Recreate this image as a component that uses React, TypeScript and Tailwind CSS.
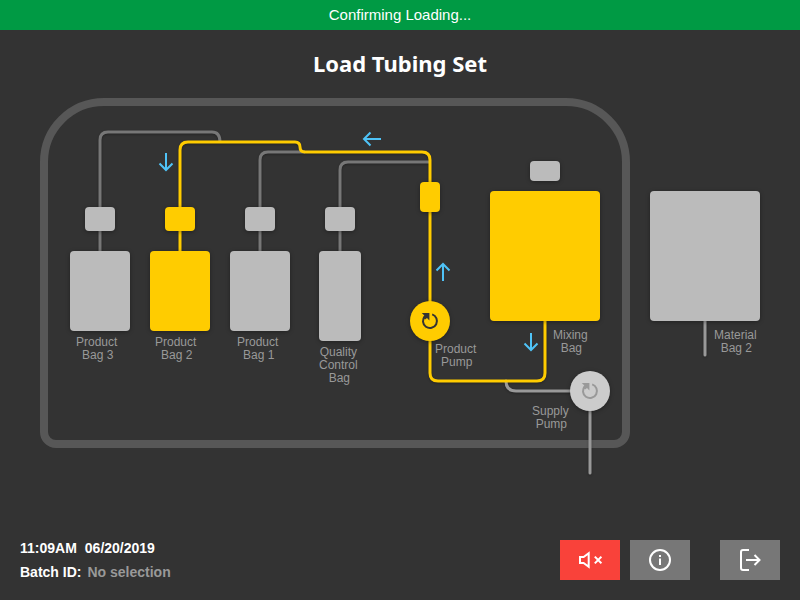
import type { ReactNode } from "react";

type Tone = "active" | "idle";

const toneClass: Record<Tone, string> = {
  active: "bg-[#ffcc00]",
  idle: "bg-[#bbbbbb]",
};

function Block({ tone, place }: { tone: Tone; place: string }) {
  return (
    <div
      className={`absolute rounded-sm shadow-[0_1px_4px_rgba(0,0,0,0.35)] ${toneClass[tone]} ${place}`}
    />
  );
}

function Label({ lines, place }: { lines: string[]; place: string }) {
  return (
    <p className={`absolute text-center text-[12px] leading-[13px] whitespace-nowrap text-[#999999] ${place}`}>
      {lines.map((line) => (
        <span key={line} className="block last:pl-0.5">
          {line}
        </span>
      ))}
    </p>
  );
}

function Pump({ place }: { place: string }) {
  return (
    <div
      className={`absolute flex size-10 items-center justify-center rounded-full shadow-[0_1px_4px_rgba(0,0,0,0.35)] ${place}`}
    >
      <svg viewBox="0 0 20 20" className="size-5" aria-hidden="true">
        <path d="M12.2 3.4A7 7 0 1 1 4.9 5.2" fill="none" stroke="currentColor" strokeWidth="2" />
        <path d="M1.8 2H9.4V9.4L7 7 5 8.4 3.2 6.6 4.3 4.5Z" fill="currentColor" />
      </svg>
    </div>
  );
}

function Arrow({ place }: { place: string }) {
  return (
    <svg viewBox="0 0 20 20" className={`absolute size-5 ${place}`} aria-hidden="true">
      <path d="M10 1V18M3.5 11.5 10 18 16.5 11.5" fill="none" stroke="#4fc3f7" strokeWidth="2" />
    </svg>
  );
}

function Tubing() {
  return (
    <svg
      viewBox="0 0 720 380"
      className="absolute inset-0 h-[380px] w-[720px] drop-shadow-[0_1px_1px_rgba(0,0,0,0.3)]"
      fill="none"
      strokeWidth="3"
      aria-hidden="true"
    >
      <g stroke="#777777">
        <path d="M60 160V42Q60 34 68 34H172Q180 34 180 44" />
        <path d="M220 160V62Q220 54 228 54H265" />
        <path d="M300 160V72Q300 64 308 64H390" />
      </g>
      <g stroke="#999999" strokeLinecap="round">
        <path d="M466 283Q466 293 476 293H540" />
        <path d="M550 300V375" />
        <path d="M665 220V257" />
      </g>
      <path
        d="M140 160V52Q140 44 148 44H255Q260 44 260 49Q260 54 265 54H382Q390 54 390 62V275Q390 283 398 283H497Q505 283 505 275V215"
        stroke="#ffcc00"
      />
    </svg>
  );
}

function ToolButton({ label, className, children }: { label: string; className: string; children: ReactNode }) {
  return (
    <button
      type="button"
      aria-label={label}
      className={`flex h-10 w-15 items-center justify-center text-white ${className}`}
    >
      <svg
        viewBox="0 0 24 24"
        className="size-6"
        fill="none"
        stroke="currentColor"
        strokeWidth="2"
        aria-hidden="true"
      >
        {children}
      </svg>
    </button>
  );
}

export default function App() {
  return (
    <div className="flex min-h-screen flex-col bg-[#333333] font-['Liberation_Sans',Arial,sans-serif] text-white">
      <div role="status" className="bg-[#009a44] text-center text-[15px] leading-[30px]">
        Confirming Loading...
      </div>

      <main className="flex flex-1 flex-col items-center px-5 pt-4">
        <h1 className="font-['Noto_Sans',sans-serif] text-[22px] leading-[34px] font-bold">Load Tubing Set</h1>

        <div className="relative mt-[18px] h-[380px] w-[720px] shrink-0">
          <div className="absolute top-0 left-0 h-[350px] w-[590px] rounded-t-[64px] rounded-b-[16px] border-8 border-[#575757]" />
          <Tubing />

          <Block tone="idle" place="top-[109px] left-[45px] h-6 w-[30px]" />
          <Block tone="active" place="top-[109px] left-[125px] h-6 w-[30px]" />
          <Block tone="idle" place="top-[109px] left-[205px] h-6 w-[30px]" />
          <Block tone="idle" place="top-[109px] left-[285px] h-6 w-[30px]" />
          <Block tone="active" place="top-[84px] left-[380px] h-[30px] w-5" />
          <Block tone="idle" place="top-[63px] left-[490px] h-5 w-[30px]" />

          <Block tone="idle" place="top-[153px] left-[30px] h-20 w-[60px]" />
          <Block tone="active" place="top-[153px] left-[110px] h-20 w-[60px]" />
          <Block tone="idle" place="top-[153px] left-[190px] h-20 w-[60px]" />
          <Block tone="idle" place="top-[153px] left-[279px] h-[90px] w-[42px]" />
          <Block tone="active" place="top-[93px] left-[450px] h-[130px] w-[110px]" />
          <Block tone="idle" place="top-[93px] left-[610px] h-[130px] w-[110px]" />

          <Pump place="top-[203px] left-[370px] bg-[#ffcc00] text-[#333333]" />
          <Pump place="top-[273px] left-[530px] bg-[#cccccc] text-[#999999]" />

          <Arrow place="top-[54px] left-[116px]" />
          <Arrow place="top-[31px] left-[322px] rotate-90" />
          <Arrow place="top-[164px] left-[393px] rotate-180" />
          <Arrow place="top-[234px] left-[481px]" />

          <Label lines={["Product", "Bag 3"]} place="top-[238px] left-[36px]" />
          <Label lines={["Product", "Bag 2"]} place="top-[238px] left-[115px]" />
          <Label lines={["Product", "Bag 1"]} place="top-[238px] left-[197px]" />
          <Label lines={["Quality", "Control", "Bag"]} place="top-[248px] left-[279px]" />
          <Label lines={["Product", "Pump"]} place="top-[245px] left-[395px]" />
          <Label lines={["Mixing", "Bag"]} place="top-[231px] left-[513px]" />
          <Label lines={["Supply", "Pump"]} place="top-[307px] left-[492px]" />
          <Label lines={["Material", "Bag 2"]} place="top-[231px] left-[674px]" />
        </div>
      </main>

      <footer className="flex items-end justify-between p-5">
        <div className="-mb-1 text-[14px] leading-6 font-bold">
          <p className="flex gap-2">
            <time>11:09AM</time>
            <time>06/20/2019</time>
          </p>
          <p className="flex gap-1.5">
            <span>Batch ID:</span>
            <span className="text-[#999999]">No selection</span>
          </p>
        </div>
        <div className="flex gap-2.5">
          <ToolButton label="Mute alarm" className="bg-[#f9423a]">
            <path d="M2 9H5.6L10.7 5.3V18.7L5.6 15H2ZM16.8 8.6 23.4 15.4M23.4 8.6 16.8 15.4" />
          </ToolButton>
          <ToolButton label="Information" className="bg-[#777777]">
            <circle cx="12" cy="12" r="10" />
            <path d="M12 10.5V17M12 7V9" />
          </ToolButton>
          <ToolButton label="Exit" className="ml-5 bg-[#777777]">
            <path d="M11 2H5Q3 2 3 4V20Q3 22 5 22H11M8 12H21M16.5 7 21.5 12 16.5 17" />
          </ToolButton>
        </div>
      </footer>
    </div>
  );
}
